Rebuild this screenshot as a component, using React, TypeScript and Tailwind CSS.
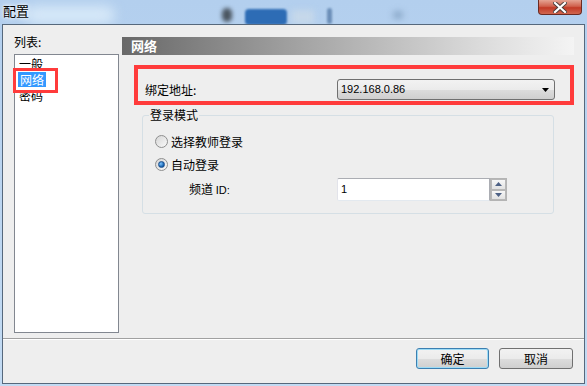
import React from 'react';

const latin = "font-['Liberation_Sans','Noto_Sans_CJK_SC',sans-serif]";

const Radio = ({ checked }: { checked?: boolean }) => (
  <span className="relative w-[13px] h-[13px] rounded-full border border-[#8e8f8f] bg-[linear-gradient(135deg,#d6d6d6,#f9f9f9)] flex items-center justify-center shrink-0">
    {checked && (
      <span className="w-[7px] h-[7px] rounded-full bg-[radial-gradient(circle_at_35%_35%,#7ec4ff,#0f5ba8_70%)] border border-[#1c4f8c]" />
    )}
  </span>
);

const SpinArrow = ({ up }: { up?: boolean }) => (
  <svg width="7" height="4" viewBox="0 0 7 4">
    <path d={up ? 'M0 4L3.5 0L7 4Z' : 'M0 0L3.5 4L7 0Z'} fill="#4d6185" />
  </svg>
);

export default function App() {
  return (
    <div className="relative w-[587px] h-[386px] overflow-hidden bg-[linear-gradient(#b3cfee,#c3dbf3)] font-['Noto_Sans_CJK_SC',sans-serif] text-[12px] text-black flex flex-col">
      {/* Title bar */}
      <div className="relative h-[24px] shrink-0">
        {/* blurred desktop behind the glass */}
        <div className="absolute left-[25px] top-[6px] w-[90px] h-[18px] rounded-full bg-[#d6e8f8] blur-[6px]" />
        <div className="absolute left-[222px] top-[8px] w-[10px] h-[14px] rounded-full bg-[#4a5560] blur-[2px]" />
        <div className="absolute left-[245px] top-[9px] w-[42px] h-[16px] rounded-[4px] bg-[#2d6cb5] blur-[1px]" />
        <div className="absolute left-[292px] top-[10px] w-[22px] h-[14px] bg-[#c6d8ea] blur-[3px]" />
        <div className="absolute left-[327px] top-[8px] w-[5px] h-[16px] rounded-full bg-[#6c8fb8] blur-[1px]" />
        <div className="absolute left-[393px] top-[11px] w-[10px] h-[8px] rounded-full bg-[#8aa8c8] blur-[3px]" />
        <div className="relative pl-[3px] pt-[1px] text-[13px] leading-[20px] text-black [text-shadow:0_0_6px_#ffffff,0_0_3px_#ffffff]">配置</div>
        <div className="absolute right-[5px] top-0 w-[44px] h-[15px] rounded-b-[4px] border border-t-0 border-[#6b2a22] bg-[linear-gradient(#e5a493,#d0614d_45%,#c23a26_55%,#d0674f)] flex items-center justify-center">
          <svg width="14" height="11" viewBox="0 0 14 11">
            <path d="M2 1L12 10M12 1L2 10" stroke="#4a3d3a" strokeWidth="4" strokeLinecap="square" />
            <path d="M2 1L12 10M12 1L2 10" stroke="#ffffff" strokeWidth="2.2" strokeLinecap="square" />
          </svg>
        </div>
      </div>

      {/* Client area */}
      <div className="relative mx-[2px] mb-[2px] flex-1 border border-[#56687c] bg-[#eeeeee] flex flex-col">
        <div className="flex h-[313px]">
          {/* Left list */}
          <div className="w-[116px] pl-[11px] pt-[10px]">
            <div className="h-[14px] leading-[14px]">列表:</div>
            <div className="relative mt-[5px] w-[105px] h-[279px] border border-[#828790] bg-white pl-[3px] pt-[1px]">
              <div className="h-[16px] leading-[16px] px-[1px]">一般</div>
              <div className="h-[16px] leading-[16px]">
                <span className="inline-block h-[15px] leading-[15px] px-[2px] bg-[#3399ff] text-white">网络</span>
              </div>
              <div className="h-[16px] leading-[16px] px-[1px]">密码</div>
            </div>
          </div>

          {/* Right panel */}
          <div className="ml-[3px] w-[452px] pt-[12px]">
            <div className="h-[18px] pl-[9px] flex items-center bg-[linear-gradient(to_right,#686868,#a4a4a4_40%,#dcdcdc_80%,#f4f4f4)] text-white font-bold text-[13px]">
              网络
            </div>

            <div className="mt-[10px] ml-[12px] w-[440px] border-[4px] border-[#ff3b3b] pt-[10px] pb-[1px] pl-[7px] flex items-center">
              <div className="w-[192px]">绑定地址:</div>
              <div className="w-[218px] h-[21px] rounded-[3px] border border-[#707070] bg-[linear-gradient(#f2f2f2,#ebebeb_50%,#dddddd_51%,#cfcfcf)] flex items-center justify-between pl-[3px] pr-[5px]">
                <span className={`${latin} text-[11px]`}>192.168.0.86</span>
                <svg width="7" height="4" viewBox="0 0 7 4">
                  <path d="M0 0L7 0L3.5 4Z" fill="#000" />
                </svg>
              </div>
            </div>

            <fieldset className="mt-[3px] ml-[20px] w-[412px] rounded-[3px] border border-[#d5dfe5] pl-[12px] pb-[12px]">
              <legend className="ml-[-6px] px-[1px] leading-[14px]">登录模式</legend>
              <div className="mt-[13px] h-[13px] flex items-center gap-[3px]">
                <Radio />
                <span>选择教师登录</span>
              </div>
              <div className="mt-[10px] h-[13px] flex items-center gap-[3px]">
                <Radio checked />
                <span>自动登录</span>
              </div>
              <div className="mt-[7px] pl-[34px] flex items-center">
                <div className="w-[148px]">
                  频道 <span className={`${latin} text-[11px]`}>ID:</span>
                </div>
                <div className="flex">
                  <div className={`w-[153px] h-[23px] rounded-l-[2px] border border-[#abadb3] border-b-[#e3e9ef] border-l-[#e2e3ea] bg-white pl-[3px] flex items-center ${latin} text-[11px]`}>
                    1
                  </div>
                  <div className="w-[17px] h-[23px] border border-[#b4b4b4] bg-[#e8e8e8] flex flex-col">
                    <div className="flex-1 border border-[#b8b8b8] bg-[linear-gradient(#f7f7f7,#e2e2e2)] flex items-center justify-center">
                      <SpinArrow up />
                    </div>
                    <div className="flex-1 border border-[#b8b8b8] bg-[linear-gradient(#f7f7f7,#e2e2e2)] flex items-center justify-center">
                      <SpinArrow />
                    </div>
                  </div>
                </div>
              </div>
            </fieldset>
          </div>
        </div>

        {/* Separator */}
        <div className="h-[1px] bg-[#a0a0a0]" />
        <div className="h-[1px] bg-white" />

        {/* Buttons */}
        <div className="flex-1 flex justify-end items-start pt-[8px] pr-[11px] gap-[10px]">
          <button className="w-[73px] h-[21px] rounded-[3px] border border-[#3c7fb1] shadow-[inset_0_0_0_1px_#9ddcf6] bg-[linear-gradient(#f2f2f2,#ebebeb_50%,#dddddd_51%,#cfcfcf)] text-[12px] leading-none">
            确定
          </button>
          <button className="w-[74px] h-[21px] rounded-[3px] border border-[#707070] bg-[linear-gradient(#f2f2f2,#ebebeb_50%,#dddddd_51%,#cfcfcf)] text-[12px] leading-none">
            取消
          </button>
        </div>

        {/* red annotation around the selected list item */}
        <div className="absolute left-[10px] top-[43px] w-[45px] h-[25px] border-[3px] border-[#ff3b3b]" />
      </div>
    </div>
  );
}
